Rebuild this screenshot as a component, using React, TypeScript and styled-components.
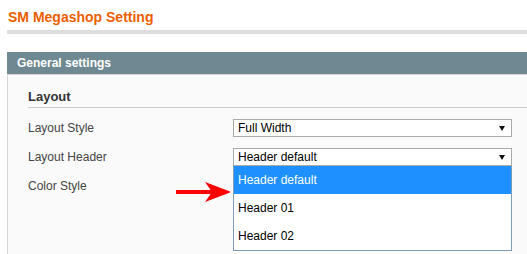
import React from "react";
import styled, { createGlobalStyle } from "styled-components";

const colors = {
  title: "#eb5e00",
  rule: "#dddddd",
  legend: "#6f8992",
  panelBorder: "#d6d6d6",
  panel: "#fafafa",
  text: "#444444",
  selectBorder: "#aaaaaa",
  listBorder: "#7f9db9",
  highlight: "#1e90ff",
  arrow: "#ff0000",
};

const GlobalStyle = createGlobalStyle`
  html, body {
    margin: 0;
    padding: 0;
    background: #ffffff;
    font-family: "Liberation Sans", Arial, sans-serif;
    overflow: hidden;
  }
`;

const headerOptions = ["Header default", "Header 01", "Header 02"];

export default function App() {
  return (
    <>
      <GlobalStyle />
      <Page>
        <Title>SM Megashop Setting</Title>
        <Rule />
        <Fieldset>
          <Legend>General settings</Legend>
          <Panel>
            <SectionTitle>Layout</SectionTitle>
            <Rows>
              <Row>
                <Label>Layout Style</Label>
                <Select>
                  <span>Full Width</span>
                  <Caret />
                </Select>
              </Row>
              <Row>
                <Label>Layout Header</Label>
                <SelectWrap>
                  <Select>
                    <span>Header default</span>
                    <Caret />
                  </Select>
                  <OptionList>
                    {headerOptions.map((o, i) => (
                      <Option key={o} selected={i === 0}>
                        {o}
                      </Option>
                    ))}
                  </OptionList>
                </SelectWrap>
              </Row>
              <Row>
                <Label>Color Style</Label>
                <ArrowCell>
                  <Arrow />
                </ArrowCell>
              </Row>
            </Rows>
          </Panel>
        </Fieldset>
      </Page>
    </>
  );
}

function Caret() {
  return (
    <CaretSvg width="6" height="5" viewBox="0 0 6 5">
      <path d="M0 0 H6 L3 5 Z" fill="#111" />
    </CaretSvg>
  );
}

// red pointer at the open dropdown
function Arrow() {
  return (
    <ArrowSvg width="56" height="20" viewBox="0 0 56 20">
      <rect x="2" y="8" width="42" height="4" fill={colors.arrow} />
      <path d="M31 0 L56 9.5 L56 10.5 L31 20 L38 10 Z" fill={colors.arrow} />
    </ArrowSvg>
  );
}

const Page = styled.div`
  display: flex;
  flex-direction: column;
  width: 527px;
  height: 254px;
  padding: 8px 0 0 7px;
  box-sizing: border-box;
  overflow: hidden;
`;

const Title = styled.h1`
  margin: 0 0 4px 1px;
  font-size: 14px;
  line-height: 18px;
  font-weight: bold;
  color: ${colors.title};
`;

const Rule = styled.div`
  height: 4px;
  flex-shrink: 0;
  background: ${colors.rule};
  margin-bottom: 18px;
`;

const Fieldset = styled.div`
  flex: 1;
  display: flex;
  flex-direction: column;
  min-height: 0;
`;

const Legend = styled.div`
  height: 22px;
  line-height: 22px;
  padding-left: 10px;
  background: ${colors.legend};
  color: #ffffff;
  font-size: 12px;
  font-weight: bold;
  border-bottom: 1px solid ${colors.panelBorder};
`;

const Panel = styled.div`
  flex: 1;
  position: relative;
  background: ${colors.panel};
  border-left: 1px solid ${colors.panelBorder};
  padding: 14px 0 0 20px;
`;

const SectionTitle = styled.h2`
  margin: 0;
  font-size: 13px;
  line-height: 16px;
  font-weight: bold;
  color: #333;
  padding-bottom: 2px;
  border-bottom: 1px solid #cccccc;
`;

const Rows = styled.div`
  display: flex;
  flex-direction: column;
  gap: 11px;
  padding-top: 11px;
`;

const Row = styled.div`
  display: grid;
  grid-template-columns: 205px 279px;
  align-items: center;
  height: 18px;
`;

const Label = styled.div`
  font-size: 12px;
  color: ${colors.text};
`;

const SelectWrap = styled.div`
  position: relative;
`;

const Select = styled.div`
  display: flex;
  align-items: center;
  justify-content: space-between;
  height: 18px;
  box-sizing: border-box;
  padding: 0 6px 0 4px;
  background: #ffffff;
  border: 1px solid ${colors.selectBorder};
  font-size: 12px;
  color: #000;
`;

const CaretSvg = styled.svg`
  display: block;
`;

const OptionList = styled.div`
  position: absolute;
  top: 18px;
  left: 0;
  right: 0;
  background: #ffffff;
  border: 1px solid ${colors.listBorder};
  border-top: none;
  z-index: 2;
`;

const Option = styled.div<{ selected?: boolean }>`
  height: 28px;
  line-height: 28px;
  padding-left: 4px;
  font-size: 12px;
  background: ${(p) => (p.selected ? colors.highlight : "#ffffff")};
  color: ${(p) => (p.selected ? "#ffffff" : "#000000")};
`;

const ArrowCell = styled.div`
  position: relative;
  height: 18px;
`;

const ArrowSvg = styled.svg`
  position: absolute;
  left: -59px;
  top: 5px;
  z-index: 3;
`;
